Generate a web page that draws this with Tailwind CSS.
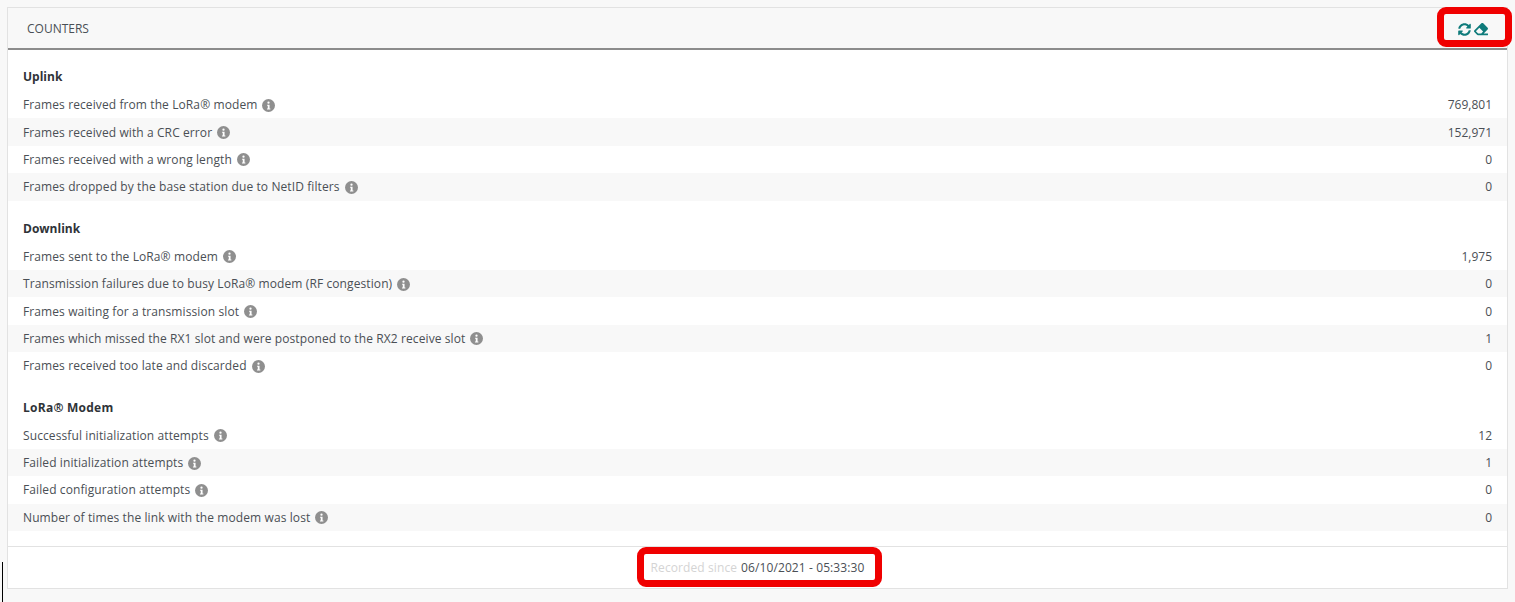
<!DOCTYPE html>
<html lang="en">
  <head>
    <meta charset="UTF-8" />
    <title>Counters</title>
    <script src="https://cdn.jsdelivr.net/npm/@tailwindcss/browser@4"></script>
  </head>
  <body class="relative h-[602px] w-[1515px] overflow-hidden bg-[#f8f8f8] font-['Open_Sans','Noto_Sans',sans-serif] text-[12px] text-[#4a4f55]">
    <div class="pt-[7px] pl-[7px]">
      <div class="flex h-[582px] w-[1501px] flex-col border border-[#e2e2e2] bg-white">
        <!-- header -->
        <div class="flex h-[42px] shrink-0 items-center justify-between border-b-2 border-[#8c8c8c] bg-[#f8f8f8] pt-[2px] pr-[19px] pl-[19px]">
          <span class="text-[#4a4f55]">COUNTERS</span>
          <div class="flex items-center gap-[3px] text-[#0f7b7b]">
            <svg class="h-[13px] w-[13px]" viewBox="0 0 512 512" fill="currentColor"><path d="M370.7 133.3C339.5 104 298.9 88 255.8 88c-77.5.1-144.3 53.2-162.8 126.9-1.3 5.4-6.1 9.2-11.7 9.2H24.1c-7.5 0-13.2-6.8-11.8-14.2C33.9 94.9 134.8 8 256 8c66.4 0 126.8 26.1 171.3 68.7L463 41c15.1-15.1 41-4.4 41 17v134c0 13.3-10.7 24-24 24H346c-21.4 0-32.1-25.9-17-41l41.7-41.7zM32 296h134c21.4 0 32.1 25.9 17 41l-41.7 41.700c31.2 29.3 71.8 45.3 114.9 45.3 77.4-.1 144.3-53.1 162.8-126.8 1.3-5.4 6.1-9.2 11.7-9.2h57.3c7.5 0 13.2 6.8 11.8 14.2C478.1 417.1 377.2 504 256 504c-66.4 0-126.8-26.1-171.3-68.7L49 471c-15.1 15.1-41 4.4-41-17V320c0-13.3 10.7-24 24-24z"/></svg>
            <svg class="h-[14px] w-[14px]" viewBox="0 0 512 512" fill="currentColor"><path d="M497.941 273.941c18.745-18.745 18.745-49.137 0-67.882l-160-160c-18.745-18.745-49.137-18.745-67.882 0l-256 256c-18.745 18.745-18.745 49.137 0 67.882l96 96A48.004 48.004 0 0 0 144 480h356c6.627 0 12-5.373 12-12v-40c0-6.627-5.373-12-12-12H355.883l142.058-142.059zm-302.627-62.627l137.373 137.373L265.373 416H150.628l-80-80 124.686-124.686z"/></svg>
          </div>
        </div>

        <!-- body -->
        <div class="flex-1">
          <div class="flex h-[41px] items-end pb-[5px] pl-[15px] font-bold text-[#2f3338]">Uplink</div>
          <div class="flex h-[27.4px] items-center justify-between pt-px pr-[15px] pl-[15px]"><span class="flex items-center gap-[5px] tracking-[0.1px]">Frames received from the LoRa® modem <svg class="h-[13px] w-[13px]" viewBox="0 0 16 16"><circle cx="8" cy="8" r="8" fill="#8f8f8f"/><circle cx="8" cy="4.500" r="1.400" fill="#fff"/><path d="M6.300 7h3v4.700h1v1.300H6.100v-1.300h1V8.300h-.8z" fill="#fff"/></svg></span><span>769,801</span></div>
          <div class="flex h-[27.4px] items-center justify-between bg-[#f8f8f8] pt-px pr-[15px] pl-[15px]"><span class="flex items-center gap-[5px] tracking-[0.1px]">Frames received with a CRC error <svg class="h-[13px] w-[13px]" viewBox="0 0 16 16"><circle cx="8" cy="8" r="8" fill="#8f8f8f"/><circle cx="8" cy="4.500" r="1.400" fill="#fff"/><path d="M6.300 7h3v4.700h1v1.300H6.100v-1.300h1V8.300h-.8z" fill="#fff"/></svg></span><span>152,971</span></div>
          <div class="flex h-[27.4px] items-center justify-between pt-px pr-[15px] pl-[15px]"><span class="flex items-center gap-[5px] tracking-[0.1px]">Frames received with a wrong length <svg class="h-[13px] w-[13px]" viewBox="0 0 16 16"><circle cx="8" cy="8" r="8" fill="#8f8f8f"/><circle cx="8" cy="4.500" r="1.400" fill="#fff"/><path d="M6.300 7h3v4.700h1v1.300H6.100v-1.300h1V8.300h-.8z" fill="#fff"/></svg></span><span>0</span></div>
          <div class="flex h-[27.4px] items-center justify-between bg-[#f8f8f8] pt-px pr-[15px] pl-[15px]"><span class="flex items-center gap-[5px] tracking-[0.1px]">Frames dropped by the base station due to NetID filters <svg class="h-[13px] w-[13px]" viewBox="0 0 16 16"><circle cx="8" cy="8" r="8" fill="#8f8f8f"/><circle cx="8" cy="4.500" r="1.400" fill="#fff"/><path d="M6.300 7h3v4.700h1v1.300H6.100v-1.300h1V8.300h-.8z" fill="#fff"/></svg></span><span>0</span></div>

          <div class="flex h-[42px] items-end pb-[5px] pl-[15px] font-bold text-[#2f3338]">Downlink</div>
          <div class="flex h-[27.4px] items-center justify-between pt-px pr-[15px] pl-[15px]"><span class="flex items-center gap-[5px] tracking-[0.1px]">Frames sent to the LoRa® modem <svg class="h-[13px] w-[13px]" viewBox="0 0 16 16"><circle cx="8" cy="8" r="8" fill="#8f8f8f"/><circle cx="8" cy="4.500" r="1.400" fill="#fff"/><path d="M6.300 7h3v4.700h1v1.300H6.100v-1.300h1V8.300h-.8z" fill="#fff"/></svg></span><span>1,975</span></div>
          <div class="flex h-[27.4px] items-center justify-between bg-[#f8f8f8] pt-px pr-[15px] pl-[15px]"><span class="flex items-center gap-[5px] tracking-[0.1px]">Transmission failures due to busy LoRa® modem (RF congestion) <svg class="h-[13px] w-[13px]" viewBox="0 0 16 16"><circle cx="8" cy="8" r="8" fill="#8f8f8f"/><circle cx="8" cy="4.500" r="1.400" fill="#fff"/><path d="M6.300 7h3v4.700h1v1.300H6.100v-1.300h1V8.300h-.8z" fill="#fff"/></svg></span><span>0</span></div>
          <div class="flex h-[27.4px] items-center justify-between pt-px pr-[15px] pl-[15px]"><span class="flex items-center gap-[5px] tracking-[0.1px]">Frames waiting for a transmission slot <svg class="h-[13px] w-[13px]" viewBox="0 0 16 16"><circle cx="8" cy="8" r="8" fill="#8f8f8f"/><circle cx="8" cy="4.500" r="1.400" fill="#fff"/><path d="M6.300 7h3v4.700h1v1.300H6.100v-1.300h1V8.300h-.8z" fill="#fff"/></svg></span><span>0</span></div>
          <div class="flex h-[27.4px] items-center justify-between bg-[#f8f8f8] pt-px pr-[15px] pl-[15px]"><span class="flex items-center gap-[5px] tracking-[0.1px]">Frames which missed the RX1 slot and were postponed to the RX2 receive slot <svg class="h-[13px] w-[13px]" viewBox="0 0 16 16"><circle cx="8" cy="8" r="8" fill="#8f8f8f"/><circle cx="8" cy="4.500" r="1.400" fill="#fff"/><path d="M6.300 7h3v4.700h1v1.300H6.100v-1.300h1V8.300h-.8z" fill="#fff"/></svg></span><span>1</span></div>
          <div class="flex h-[27.4px] items-center justify-between pt-px pr-[15px] pl-[15px]"><span class="flex items-center gap-[5px] tracking-[0.1px]">Frames received too late and discarded <svg class="h-[13px] w-[13px]" viewBox="0 0 16 16"><circle cx="8" cy="8" r="8" fill="#8f8f8f"/><circle cx="8" cy="4.500" r="1.400" fill="#fff"/><path d="M6.300 7h3v4.700h1v1.300H6.100v-1.300h1V8.300h-.8z" fill="#fff"/></svg></span><span>0</span></div>

          <div class="flex h-[42px] items-end pb-[5px] pl-[15px] font-bold tracking-[0.25px] text-[#2f3338]">LoRa® Modem</div>
          <div class="flex h-[27.4px] items-center justify-between pt-px pr-[15px] pl-[15px]"><span class="flex items-center gap-[5px] tracking-[0.1px]">Successful initialization attempts <svg class="h-[13px] w-[13px]" viewBox="0 0 16 16"><circle cx="8" cy="8" r="8" fill="#8f8f8f"/><circle cx="8" cy="4.500" r="1.400" fill="#fff"/><path d="M6.300 7h3v4.700h1v1.300H6.100v-1.300h1V8.300h-.8z" fill="#fff"/></svg></span><span>12</span></div>
          <div class="flex h-[27.4px] items-center justify-between bg-[#f8f8f8] pt-px pr-[15px] pl-[15px]"><span class="flex items-center gap-[5px] tracking-[0.1px]">Failed initialization attempts <svg class="h-[13px] w-[13px]" viewBox="0 0 16 16"><circle cx="8" cy="8" r="8" fill="#8f8f8f"/><circle cx="8" cy="4.500" r="1.400" fill="#fff"/><path d="M6.300 7h3v4.700h1v1.300H6.100v-1.300h1V8.300h-.8z" fill="#fff"/></svg></span><span>1</span></div>
          <div class="flex h-[27.4px] items-center justify-between pt-px pr-[15px] pl-[15px]"><span class="flex items-center gap-[5px] tracking-[0.1px]">Failed configuration attempts <svg class="h-[13px] w-[13px]" viewBox="0 0 16 16"><circle cx="8" cy="8" r="8" fill="#8f8f8f"/><circle cx="8" cy="4.500" r="1.400" fill="#fff"/><path d="M6.300 7h3v4.700h1v1.300H6.100v-1.300h1V8.300h-.8z" fill="#fff"/></svg></span><span>0</span></div>
          <div class="flex h-[27.4px] items-center justify-between bg-[#f8f8f8] pt-px pr-[15px] pl-[15px]"><span class="flex items-center gap-[5px] tracking-[0.1px]">Number of times the link with the modem was lost <svg class="h-[13px] w-[13px]" viewBox="0 0 16 16"><circle cx="8" cy="8" r="8" fill="#8f8f8f"/><circle cx="8" cy="4.500" r="1.400" fill="#fff"/><path d="M6.300 7h3v4.700h1v1.300H6.100v-1.300h1V8.300h-.8z" fill="#fff"/></svg></span><span>0</span></div>
        </div>

        <!-- footer -->
        <div class="flex h-[42px] shrink-0 items-center justify-center border-t border-[#e2e2e2] tracking-[0.1px]">
          <span class="mr-[4px] text-[#d4d4d4]">Recorded since</span><span>06/10/2021 - 05:33:30</span>
        </div>
      </div>
    </div>

    <!-- annotations -->
    <div class="absolute top-[7px] left-[1437px] h-[40px] w-[75px] rounded-[9px] border-[7px] border-[#f00000]"></div>
    <div class="absolute top-[547px] left-[637px] h-[40px] w-[245px] rounded-[9px] border-[7px] border-[#f00000]"></div>
    <div class="absolute top-[562px] left-[2px] h-[40px] w-px bg-black"></div>
  </body>
</html>
